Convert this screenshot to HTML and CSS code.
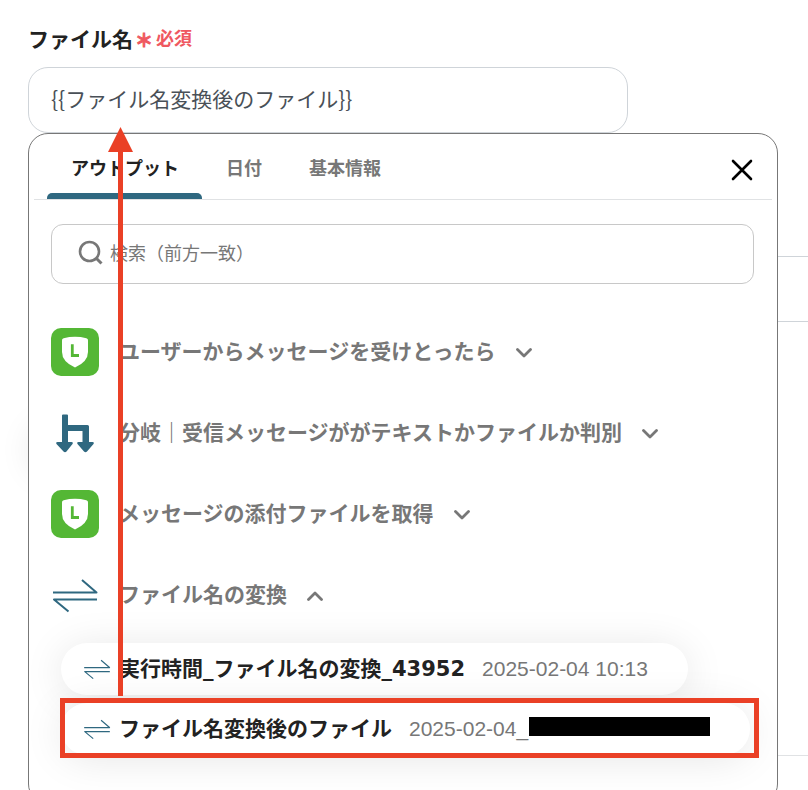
FILE: index.html
```html
<!DOCTYPE html>
<html lang="ja">
<head>
<meta charset="utf-8">
<meta name="viewport" content="width=device-width, initial-scale=1">
<title>ファイル名</title>
<link rel="stylesheet" href="styles.css">
</head>
<body>
<svg class="defs" aria-hidden="true">
  <symbol id="line-works" viewBox="0 0 48 48">
    <rect width="48" height="48" rx="10" fill="#54b735"/>
    <path d="M11 12.2Q11 10.6 12.6 10.2Q24 7.4 35.4 10.2Q37 10.6 37 12.2V24Q37 33.6 24 39.6Q11 33.6 11 24Z" fill="#fff"/>
    <path d="M21.300 16.300V27.500H28" fill="none" stroke="#54b735" stroke-width="2.800"/>
  </symbol>
  <symbol id="branch" viewBox="0 0 48 48">
    <path d="M11 6.500Q11 5.500 12 5.500H16Q17 5.500 17 6.500V16H36.500Q38 16 38 17.500V33H41.500Q43.500 33.200 42.500 35L36 42.500Q34.500 44 33 42.500L26.500 35Q25.500 33.200 27.500 33H31.500V22H17V33H20.500Q22.500 33.200 21.500 35L15.500 42.500Q14 44 12.500 42.500L5.500 35Q4.500 33.200 6.500 33H11Z" fill="#2f6880"/>
  </symbol>
  <symbol id="convert" viewBox="0 0 48 36">
    <path d="M2 15.500H45.500L31 3M46 22.500H3L17.500 34.500" fill="none" stroke="#2f6880" stroke-width="2" stroke-linejoin="round"/>
  </symbol>
  <symbol id="chevron" viewBox="0 0 16 10">
    <path d="M1.500 1.500L8 8L14.500 1.500" fill="none" stroke="#777" stroke-width="2.800" stroke-linecap="round" stroke-linejoin="round"/>
  </symbol>
</svg>

<main class="page">
  <section class="field">
    <label class="field-label" for="file-name">ファイル名<span class="required"><span class="asterisk">＊</span><span>必須</span></span></label>
    <input class="text-input" id="file-name" type="text" value="{{ファイル名変換後のファイル}}">

    <div class="picker">
      <nav class="tabs">
        <button class="tab tab-active" type="button">アウトプット</button>
        <button class="tab" type="button">日付</button>
        <button class="tab" type="button">基本情報</button>
        <button class="close" type="button" aria-label="閉じる">
          <svg width="22" height="22" viewBox="0 0 22 22"><path d="M2 2L20 20M20 2L2 20" stroke="#000" stroke-width="2.600" stroke-linecap="round"/></svg>
        </button>
      </nav>

      <div class="picker-body">
        <label class="search">
          <svg width="26" height="26" viewBox="0 0 26 26"><circle cx="11.500" cy="11.500" r="9.500" fill="none" stroke="#777" stroke-width="2.600"/><path d="M18.500 18.500L23.500 23.500" stroke="#777" stroke-width="3"/></svg>
          <input type="search" aria-label="検索" placeholder="検索（前方一致）">
        </label>

        <ul class="steps">
          <li>
            <button class="step" type="button"><svg class="step-icon"><use href="#line-works"/></svg>ユーザーからメッセージを受けとったら<svg class="chevron"><use href="#chevron"/></svg></button>
          </li>
          <li>
            <button class="step" type="button"><svg class="step-icon"><use href="#branch"/></svg>分岐｜受信メッセージががテキストかファイルか判別<svg class="chevron"><use href="#chevron"/></svg></button>
          </li>
          <li>
            <button class="step" type="button"><svg class="step-icon"><use href="#line-works"/></svg>メッセージの添付ファイルを取得<svg class="chevron"><use href="#chevron"/></svg></button>
          </li>
          <li>
            <button class="step" type="button"><svg class="step-icon"><use href="#convert"/></svg>ファイル名の変換<svg class="chevron chevron-up"><use href="#chevron"/></svg></button>
            <ul class="outputs">
              <li>
                <button class="output" type="button"><svg class="output-icon"><use href="#convert"/></svg><span class="output-name">実行時間_ファイル名の変換_43952</span><span class="output-sample">2025-02-04 10:13</span></button>
              </li>
              <li class="marked">
                <button class="output" type="button"><svg class="output-icon"><use href="#convert"/></svg><span class="output-name">ファイル名変換後のファイル</span><span class="output-sample">2025-02-04_<span class="redacted"></span></span></button>
              </li>
            </ul>
          </li>
        </ul>
      </div>
    </div>

    <svg class="arrow" viewBox="0 0 25 569" aria-hidden="true"><path d="M12.500 0L25 25H15V569H10V25H0Z" fill="#ea4026"/></svg>
  </section>

  <div class="next-field"></div>
  <div class="next-action"></div>
  <div class="divider"></div>
</main>
</body>
</html>
```
FILE: styles.css
```css
* {
  box-sizing: border-box;
}

body {
  margin: 0;
  height: 100vh;
  overflow: hidden;
  background: #fff;
  color: #222;
  font-family: Inter, "Noto Sans CJK JP", sans-serif;
}

button,
input {
  margin: 0;
  border: 0;
  padding: 0;
  background: none;
  color: inherit;
  font: inherit;
}

button {
  cursor: pointer;
}

ul {
  margin: 0;
  padding: 0;
  list-style: none;
}

svg {
  flex: none;
  overflow: visible;
}

.defs {
  position: absolute;
  width: 0;
  height: 0;
}

.page {
  padding: 22px 30px 0 28px;
}

.field {
  position: relative;
}

.field-label {
  display: flex;
  align-items: center;
  height: 32px;
  margin-bottom: 13px;
  font-size: 21px;
  font-weight: 700;
}

.required {
  display: flex;
  gap: 3px;
  margin-left: 2px;
  color: #ef5860;
  font-size: 18px;
}

.asterisk {
  padding-top: 2px;
  -webkit-text-stroke: 1px currentColor;
}

.text-input {
  display: block;
  width: 100%;
  max-width: 600px;
  height: 66px;
  padding: 0 22px 4px;
  border: 1px solid #cfd4d9;
  border-radius: 20px;
  color: #495057;
  font-family: "Noto Sans CJK JP", sans-serif;
  font-size: 21px;
}

.picker {
  position: absolute;
  top: 100%;
  left: 0;
  width: 100%;
  padding-bottom: 48px;
  border: 1px solid #777;
  border-radius: 20px;
  background: #fff;
}

.tabs {
  display: flex;
  height: 66px;
  margin: 0 5px;
  padding: 0 10px 0 13px;
  border-bottom: 1px solid #e0e2e4;
}

.tab {
  padding: 6px 23px 6px 24px;
  color: #777;
  font-size: 18px;
  font-weight: 700;
}

.tab-active {
  position: relative;
  color: #222;
}

.tab-active::after {
  content: "";
  position: absolute;
  right: 0;
  bottom: 0;
  left: 0;
  height: 6px;
  border-radius: 5px 5px 0 0;
  background: #2f6880;
}

.close {
  display: grid;
  place-items: center;
  width: 40px;
  margin-left: auto;
  padding-top: 6px;
}

.picker-body {
  padding: 24px 23px 0 22px;
}

.search {
  display: flex;
  align-items: center;
  gap: 6px;
  height: 60px;
  padding: 0 26px 2px;
  border: 1px solid #c8c8c8;
  border-radius: 12px;
}

.search input {
  flex: 1;
  min-width: 0;
  outline: 0;
  font-size: 18px;
}

.search input::placeholder {
  color: #777;
  opacity: 1;
}

.steps {
  display: grid;
  gap: 33px;
  margin-top: 44px;
}

.step {
  display: flex;
  align-items: center;
  height: 48px;
  color: #777;
  font-size: 21px;
  font-weight: 700;
  line-height: 32px;
  white-space: nowrap;
}

.step-icon {
  width: 48px;
  height: 48px;
  margin-right: 20px;
}

.chevron {
  width: 16px;
  height: 10px;
  margin-top: 2px;
  margin-left: 20px;
}

.chevron-up {
  transform: rotate(180deg);
}

.outputs {
  display: grid;
  gap: 8px;
  justify-items: start;
  margin-top: 24px;
  padding-left: 10px;
}

.output {
  display: flex;
  align-items: center;
  height: 52px;
  padding: 0 40px 0 22px;
  border-radius: 26px;
  background: #fff;
  box-shadow: 0 4px 40px rgba(0, 0, 0, 0.1);
  font-size: 21px;
  line-height: 32px;
  white-space: nowrap;
}

.output-icon {
  width: 28px;
  height: 22px;
  margin-right: 8px;
}

.output-name {
  margin-right: 17px;
  font-family: "DejaVu Sans", "Noto Sans CJK JP", sans-serif;
  font-weight: 700;
}

.output-sample {
  display: flex;
  align-items: center;
  color: #777;
  font-family: "Liberation Sans", sans-serif;
}

.redacted {
  width: 181px;
  height: 19px;
  margin: 0 0 5px 1px;
  background: #000;
}

.marked {
  position: relative;
}

.marked::after {
  content: "";
  position: absolute;
  inset: -5px -9px -3px -1px;
  border: 5px solid #ea4026;
  pointer-events: none;
}

.arrow {
  position: absolute;
  top: 105px;
  left: 80px;
  width: 25px;
  height: 569px;
  pointer-events: none;
}

.next-field {
  height: 66px;
  margin: 123px -60px 0 0;
  border: 1px solid #cfd4d9;
  border-radius: 20px;
}

.next-action {
  width: 200px;
  height: 60px;
  margin-top: 98px;
  border-radius: 30px;
  box-shadow: 0 0 32px rgba(0, 0, 0, 0.08);
}

.divider {
  margin: 275px -60px 0 0;
  border-top: 1px solid #e0e2e4;
}
```
